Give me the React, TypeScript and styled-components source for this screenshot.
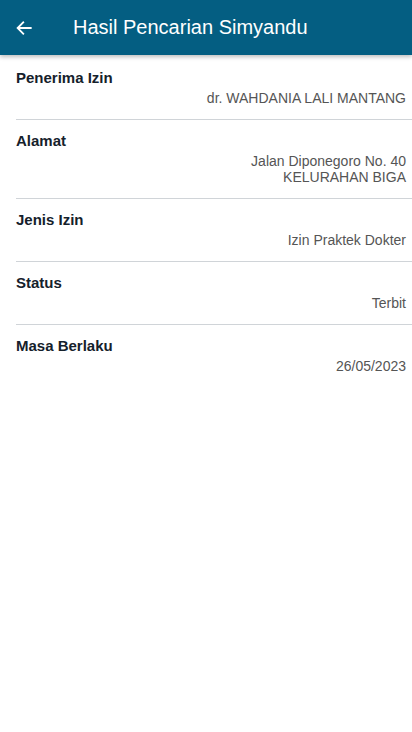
import { createGlobalStyle, styled } from "styled-components";

type Field = {
    label: string;
    value: string[];
};

const fields: Field[] = [
    { label: "Penerima Izin", value: ["dr. WAHDANIA LALI MANTANG"] },
    { label: "Alamat", value: ["Jalan Diponegoro No. 40", "KELURAHAN BIGA"] },
    { label: "Jenis Izin", value: ["Izin Praktek Dokter"] },
    { label: "Status", value: ["Terbit"] },
    { label: "Masa Berlaku", value: ["26/05/2023"] },
];

const GlobalStyle = createGlobalStyle`
    html, body {
        margin: 0;
        padding: 0;
        background: #ffffff;
        font-family: "Liberation Sans", Arial, sans-serif;
    }
`;

const App = () => {
    return (
        <Page>
            <GlobalStyle />
            <Header>
                <BackButton aria-label="Kembali">
                    <svg width="18" height="18" viewBox="0 0 24 24" fill="none">
                        <path
                            d="M21 12H4M11 4.5 3.5 12 11 19.5"
                            stroke="#ffffff"
                            strokeWidth="2.4"
                            strokeLinecap="square"
                        />
                    </svg>
                </BackButton>
                <Title>Hasil Pencarian Simyandu</Title>
            </Header>
            <List>
                {fields.map((f) => (
                    <Row key={f.label}>
                        <Label>{f.label}</Label>
                        <Value>
                            {f.value.map((line) => (
                                <div key={line}>{line}</div>
                            ))}
                        </Value>
                    </Row>
                ))}
            </List>
        </Page>
    );
};

const Page = styled.div`
    min-height: 732px;
    background: #ffffff;
`;

const Header = styled.header`
    height: 55px;
    display: flex;
    align-items: center;
    background-color: #045e82;
    box-shadow: 0 2px 4px rgba(0, 0, 0, 0.25);
    position: relative;
    z-index: 1;
`;

const BackButton = styled.button`
    width: 48px;
    height: 48px;
    padding: 0 0 0 15px;
    display: flex;
    align-items: center;
    background: none;
    border: none;
`;

const Title = styled.h1`
    margin: 0 0 0 25px;
    color: #ffffff;
    font-size: 20px;
    font-weight: normal;
`;

const List = styled.div`
    padding-top: 2px;
`;

const Row = styled.div`
    margin-left: 16px;
    padding: 13px 6px 13px 0;
    display: flex;
    flex-direction: column;
    gap: 4px;
    border-bottom: 1px solid #d0d4d8;

    &:last-child {
        border-bottom: none;
    }
`;

const Label = styled.div`
    font-size: 15px;
    line-height: 16px;
    font-weight: bold;
    color: #15212b;
`;

const Value = styled.div`
    font-size: 14px;
    line-height: 16px;
    color: #555555;
    text-align: right;
`;

export default App;
